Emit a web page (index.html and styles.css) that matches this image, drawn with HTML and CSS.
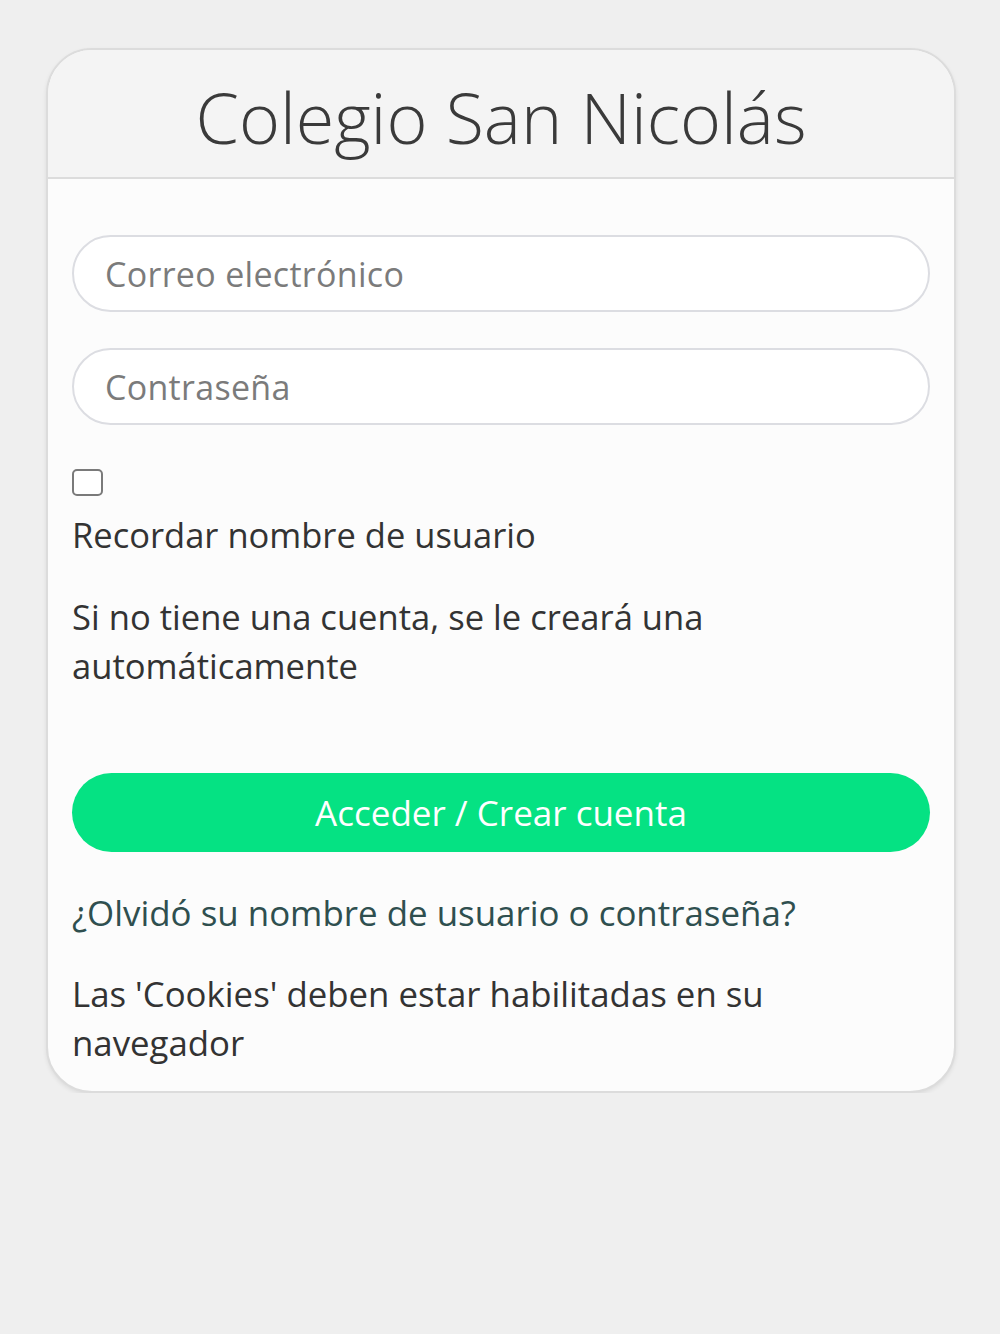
FILE: index.html
```html
<!DOCTYPE html>
<html lang="es">
<head>
<meta charset="utf-8">
<title>Colegio San Nicolás</title>
<link rel="stylesheet" href="styles.css">
</head>
<body>
<div class="card">
  <div class="card-header">
    <h1 class="title">Colegio San Nicolás</h1>
  </div>
  <form class="card-body">
    <div class="field"><span class="placeholder">Correo electrónico</span></div>
    <div class="field"><span class="placeholder">Contraseña</span></div>
    <div class="remember">
      <span class="checkbox"></span>
      <span class="remember-label">Recordar nombre de usuario</span>
    </div>
    <p class="note">Si no tiene una cuenta, se le creará una<br>automáticamente</p>
    <div class="btn">Acceder / Crear cuenta</div>
    <p class="forgot">¿Olvidó su nombre de usuario o contraseña?</p>
    <p class="cookies">Las 'Cookies' deben estar habilitadas en su<br>navegador</p>
  </form>
</div>
</body>
</html>
```

FILE: styles.css
```css
html, body {
  margin: 0;
  padding: 0;
}
body {
  background: #efefef;
  font-family: "Open Sans", "Noto Sans", sans-serif;
  color: #333;
  padding-top: 48px;
  padding-left: 46px;
}
.card {
  width: 910px;
  box-sizing: border-box;
  border: 2px solid #dcdcdc;
  border-radius: 46px;
  background: #fcfcfc;
  overflow: hidden;
  box-shadow: 0 2px 4px rgba(0,0,0,0.08);
}
.card-header {
  background: #f4f4f4;
  border-bottom: 2px solid #dcdcdc;
  height: 129px;
  box-sizing: border-box;
  display: flex;
  align-items: center;
  justify-content: center;
}
.title {
  margin: 0;
  font-weight: 300;
  font-size: 70px;
  color: #3a3a3a;
  line-height: 1;
  padding-top: 6px;
}
.card-body {
  display: flex;
  flex-direction: column;
  padding: 56px 24px 24px 24px;
  margin: 0;
}
.field {
  height: 77px;
  box-sizing: border-box;
  border: 2px solid #dcdde2;
  border-radius: 40px;
  background: #fff;
  display: flex;
  align-items: center;
  padding-left: 31px;
  margin-bottom: 36px;
}
.placeholder {
  font-size: 34px;
  letter-spacing: 0.3px;
  color: #7b7b7b;
}
.remember {
  display: flex;
  flex-direction: column;
  margin-top: 8px;
}
.checkbox {
  width: 31px;
  height: 27px;
  box-sizing: border-box;
  border: 2px solid #7a7a7a;
  border-radius: 5px;
  background: #fff;
}
.remember-label {
  font-size: 34.5px;
  line-height: 49px;
  margin-top: 14px;
}
.note {
  margin: 33px 0 0 0;
  font-size: 34.6px;
  line-height: 49px;
}
.btn {
  margin-top: 83px;
  height: 79px;
  border-radius: 40px;
  background: #05e283;
  color: #fff;
  font-size: 35px;
  display: flex;
  align-items: center;
  justify-content: center;
}
.forgot {
  margin: 36px 0 0 0;
  font-size: 34.9px;
  line-height: 49px;
  color: #2f4f4f;
}
.cookies {
  margin: 32px 0 0 0;
  font-size: 34.8px;
  line-height: 49px;
}
```
